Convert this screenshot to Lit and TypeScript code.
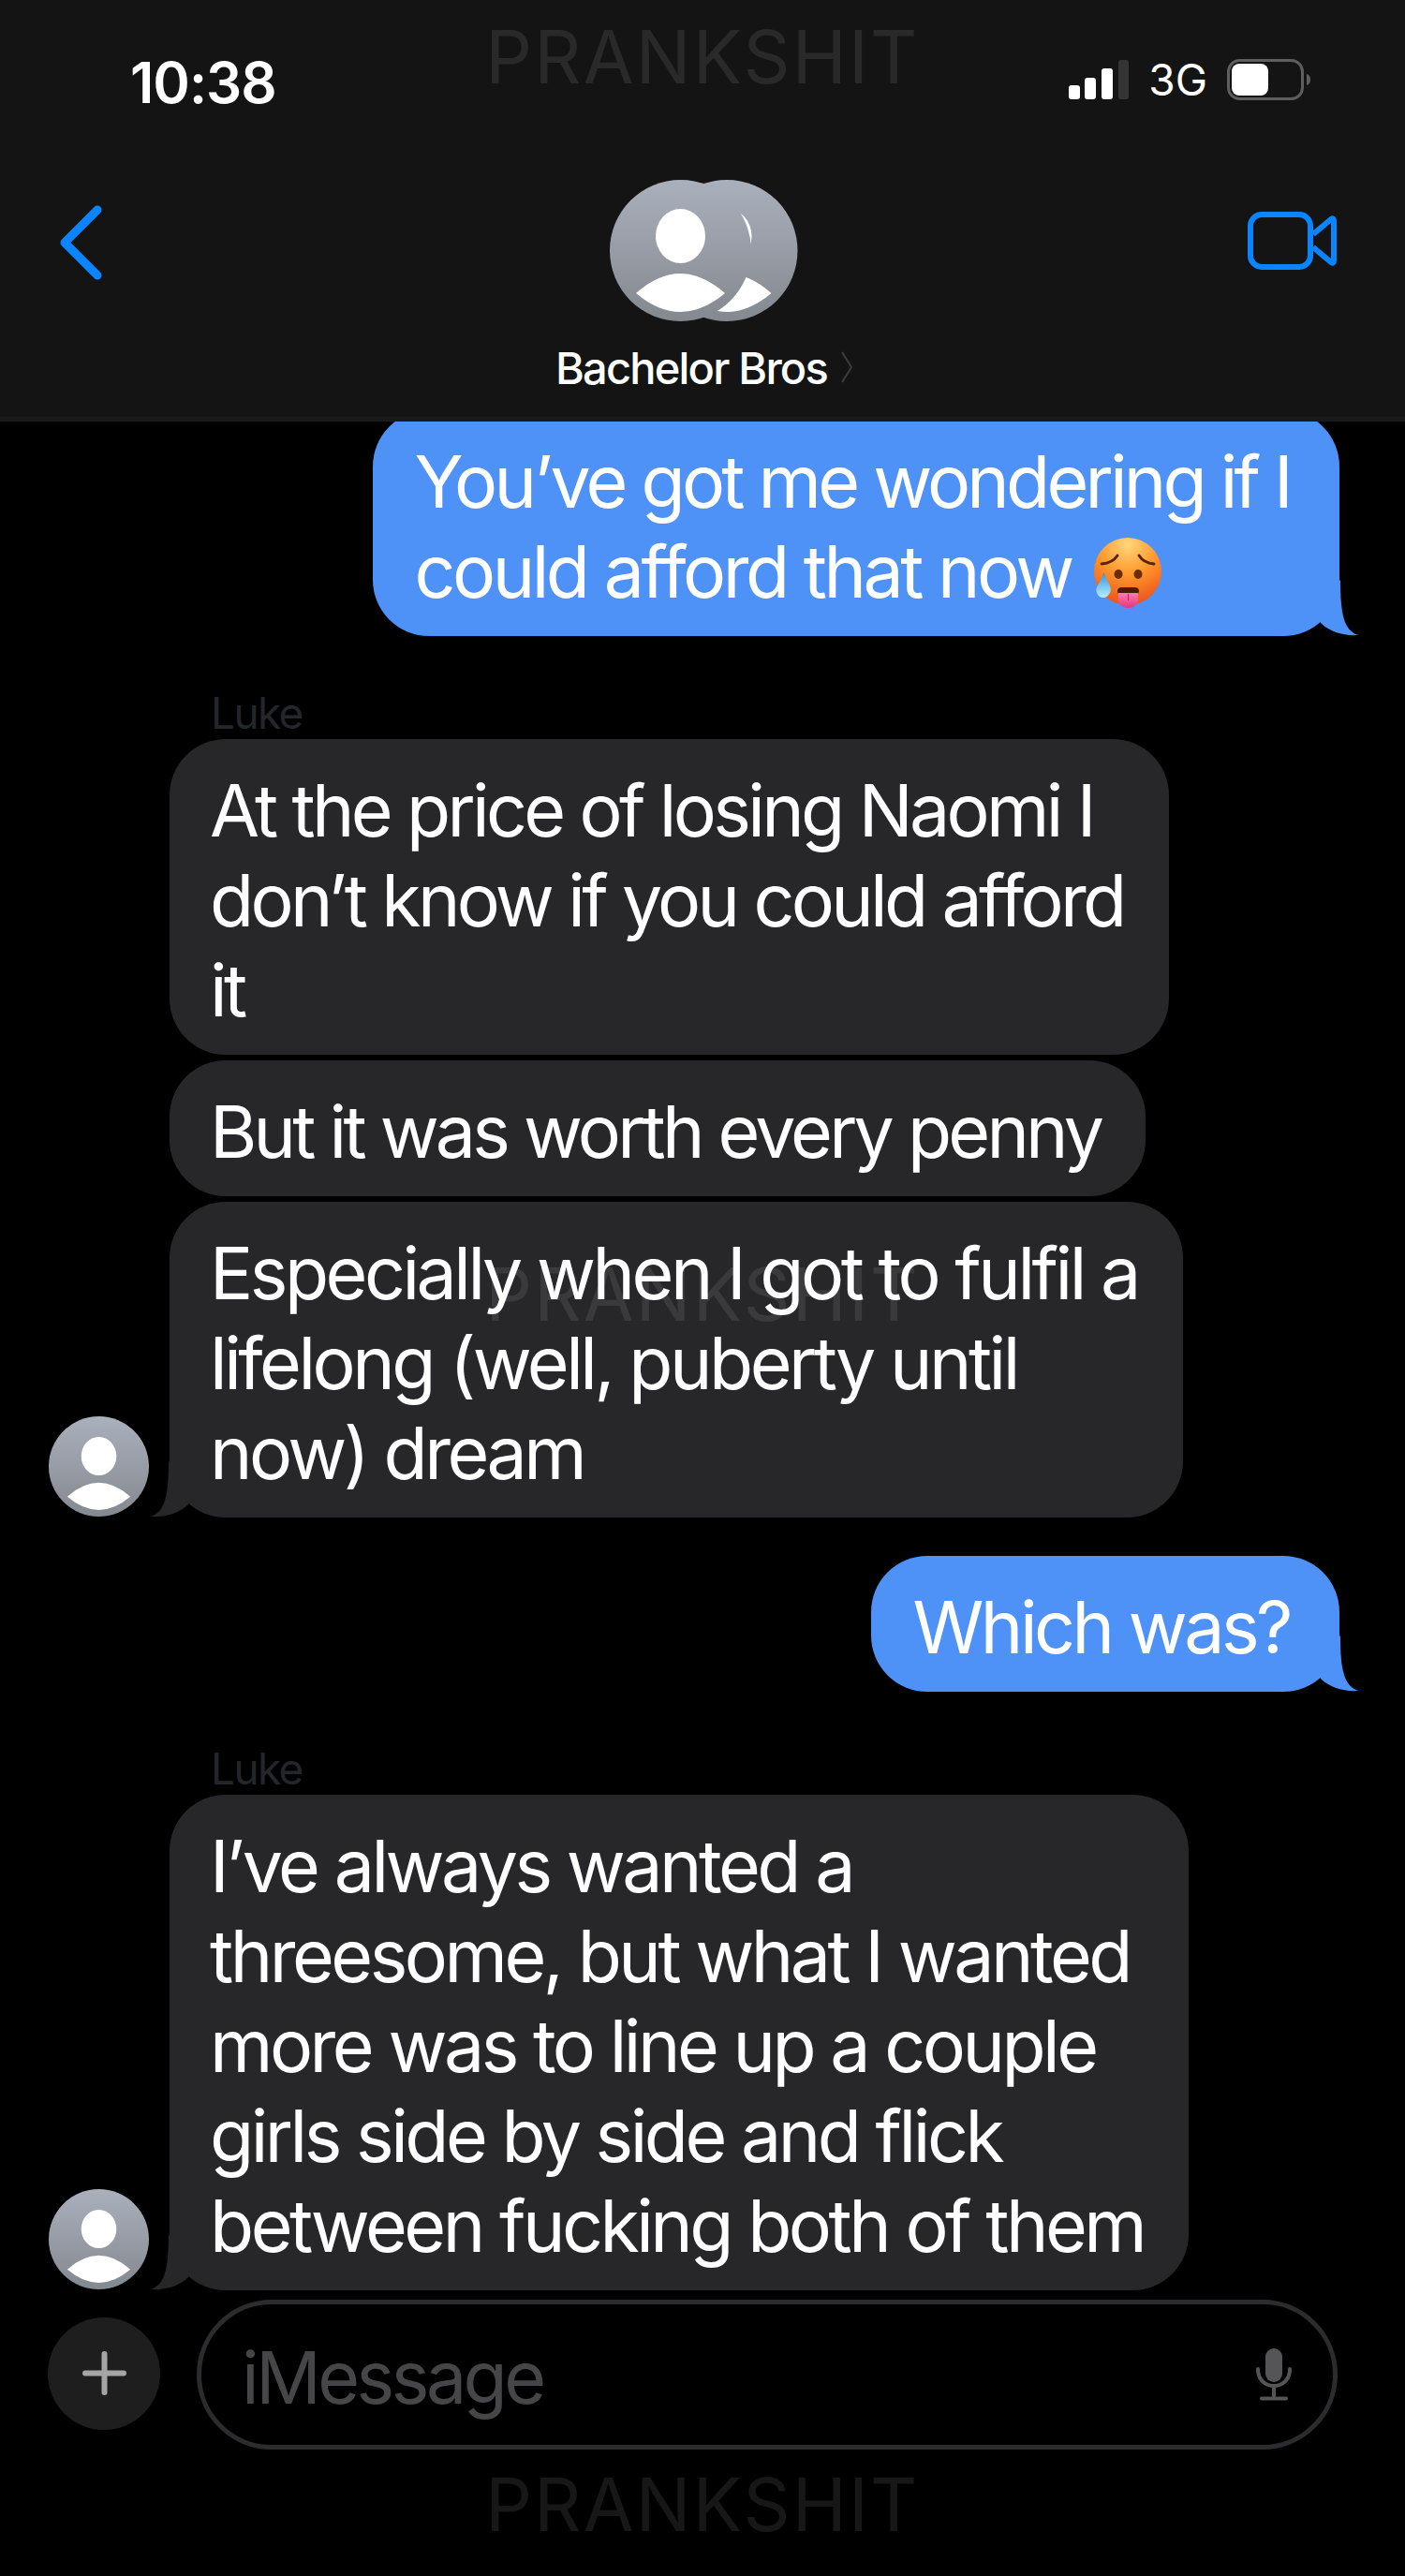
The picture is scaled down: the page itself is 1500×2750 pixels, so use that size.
import { LitElement, html, css, svg } from "lit";
import { customElement } from "lit/decorators.js";

const personDefs = svg`
  <defs>
    <linearGradient id="ag" x1="0" y1="0" x2="0" y2="1">
      <stop offset="0" stop-color="#aab0bc"/>
      <stop offset="1" stop-color="#84888f"/>
    </linearGradient>
  </defs>`;

const person = (dx: number) => svg`
  <circle cx=${75.5 + dx} cy="75.5" r="75.5" fill="url(#ag)"/>
  <ellipse cx=${75.5 + dx} cy="60" rx="26.5" ry="29" fill="#fff"/>
  <path d="M${28 + dx} 121 Q${75.5 + dx} 79 ${123 + dx} 121 Q${75.5 + dx} 161 ${28 + dx} 121Z" fill="#fff"/>`;

const tail = (cls: string) => html`<svg class="tail ${cls}" viewBox="0 0 50 60" width="50" height="60">
  <path d="M31 0C31 37 35 54 50 59C35 60 20 56 10 46L0 30Z" fill="currentColor"/>
</svg>`;

const emoji = html`<svg class="emoji" viewBox="0 0 75 75" width="75" height="75">
  <defs>
    <radialGradient id="face" cx="0.5" cy="0.1" r="0.95">
      <stop offset="0" stop-color="#ffd77c"/>
      <stop offset="0.45" stop-color="#ff9a2e"/>
      <stop offset="1" stop-color="#ec4a17"/>
    </radialGradient>
    <linearGradient id="drop" x1="0" y1="0" x2="0" y2="1">
      <stop offset="0" stop-color="#2b97dc"/>
      <stop offset="1" stop-color="#b9ecfb"/>
    </linearGradient>
    <linearGradient id="tongue" x1="0" y1="0" x2="0" y2="1">
      <stop offset="0" stop-color="#f57fb0"/>
      <stop offset="1" stop-color="#e8337f"/>
    </linearGradient>
  </defs>
  <circle cx="36" cy="36" r="36" fill="url(#face)"/>
  <path d="M8 28Q20 27 25 19M48 19Q53 27 64 28" fill="none" stroke="#5a2406" stroke-width="3" stroke-linecap="round"/>
  <ellipse cx="26" cy="39" rx="4.5" ry="5" fill="#6b2d06"/>
  <ellipse cx="47" cy="39" rx="4.5" ry="5" fill="#6b2d06"/>
  <path d="M25 57Q25 53 30 53H43Q48 53 48 57Q48 61 43 61H30Q25 61 25 57Z" fill="#4e1a08"/>
  <path d="M26 59H47V64Q47 75 36.5 75Q26 75 26 64Z" fill="url(#tongue)"/>
  <path d="M36.5 60V67" stroke="#c12a6a" stroke-width="1.2"/>
  <path d="M10.5 37Q12 42 16 49Q19 55 17 59Q14 64 10 64Q5 64 3 59Q1 55 5 49Q9 42 10.5 37Z" fill="url(#drop)"/>
</svg>`;

@customElement("app-root")
export class AppRoot extends LitElement {
  static styles = css`
    :host {
      display: block;
      position: relative;
      width: 1500px;
      height: 2750px;
      background: #000;
      overflow: hidden;
      color: #fff;
      font-family: Inter, "Liberation Sans", sans-serif;
    }
    .header {
      position: relative;
      z-index: 2;
      height: 445px;
      background: #141414;
      border-bottom: 5px solid #1a1a1a;
    }
    .status {
      height: 170px;
      display: flex;
      align-items: center;
      justify-content: space-between;
      padding: 0 100px 0 139px;
    }
    .time {
      font-size: 60px;
      font-weight: 600;
      letter-spacing: -1px;
      margin-top: 6px;
    }
    .status-right {
      display: flex;
      align-items: center;
      gap: 21px;
    }
    .net {
      font-size: 46px;
      font-weight: 400;
      letter-spacing: 0;
    }
    .nav {
      display: grid;
      grid-template-columns: 1fr auto 1fr;
      padding: 22px 72px 0 76px;
    }
    .back {
      margin: 27px 0 0 -13px;
    }
    .video {
      justify-self: end;
      margin-top: 34px;
    }
    .center {
      display: flex;
      flex-direction: column;
      align-items: center;
    }
    .name-row {
      display: flex;
      align-items: center;
      gap: 14px;
      margin-top: 21px;
      height: 56px;
    }
    .name {
      font-size: 47px;
      font-weight: 500;
      letter-spacing: -1.8px;
    }
    .list {
      display: flex;
      flex-direction: column;
      margin-top: -12px;
    }
    .out {
      align-self: flex-end;
      margin-right: 70px;
    }
    .sender {
      margin: 54px 0 0 225px;
      height: 56px;
      line-height: 56px;
      font-size: 46px;
      letter-spacing: -1.6px;
      color: #23262b;
    }
    .group {
      display: flex;
      align-items: flex-end;
      gap: 22px;
      padding-left: 52px;
    }
    .stack {
      display: flex;
      flex-direction: column;
      align-items: flex-start;
      gap: 6px;
    }
    .avatar {
      display: block;
      flex: none;
      margin-bottom: 1px;
    }
    .bubble {
      position: relative;
      padding: 28px 48px 21px 43px;
      border-radius: 60px;
      font-size: 77px;
      line-height: 96px;
      white-space: nowrap;
      letter-spacing: -3.5px;
    }
    .tight {
      letter-spacing: -3.8px;
    }
    .tighter {
      letter-spacing: -3.67px;
    }
    .blue {
      background: #4e92f7;
      color: #fff;
      padding-left: 45px;
      padding-right: 53px;
    }
    .gray {
      background: #27272a;
      color: #fff;
    }
    .tail {
      position: absolute;
      bottom: 0;
    }
    .tail-r {
      right: -20px;
      color: #4e92f7;
    }
    .tail-l {
      left: -20px;
      color: #27272a;
      transform: scaleX(-1);
    }
    .emoji {
      vertical-align: -11px;
      margin-left: 6px;
    }
    .mt {
      margin-top: 41px;
    }
    .composer {
      display: flex;
      align-items: center;
      gap: 39px;
      margin-top: 10px;
      padding-left: 51px;
      width: 1428px;
      box-sizing: border-box;
    }
    .plus {
      flex: none;
      width: 120px;
      height: 120px;
      border-radius: 50%;
      background: #1f1e1f;
      display: flex;
      align-items: center;
      justify-content: center;
      margin-top: -3px;
    }
    .pill {
      flex: 1;
      height: 160px;
      box-sizing: border-box;
      border: 5px solid #2c2c2e;
      border-radius: 80px;
      display: flex;
      align-items: center;
      justify-content: space-between;
      padding: 0 43px 0 43px;
    }
    .placeholder {
      font-size: 77px;
      letter-spacing: -3.5px;
      color: #464649;
      padding-top: 5px;
    }
    .wm {
      position: absolute;
      left: 0;
      width: 1500px;
      text-align: center;
      font-size: 78px;
      line-height: 78px;
      letter-spacing: 2.2px;
      color: rgba(255, 255, 255, 0.09);
      z-index: 3;
      pointer-events: none;
    }
    .wm-top { top: 22px; }
    .wm-mid { top: 1343px; }
    .wm-bot { top: 2635px; }
  `;

  render() {
    return html`
      <div class="header">
        <div class="status">
          <span class="time">10:38</span>
          <div class="status-right">
            <svg width="64" height="42" viewBox="0 0 64 42">
              <rect x="0" y="27" width="12" height="15" rx="3" fill="#fff"/>
              <rect x="17" y="19" width="12" height="23" rx="3" fill="#fff"/>
              <rect x="35" y="9" width="12" height="33" rx="3" fill="#fff"/>
              <rect x="53" y="0" width="11" height="42" rx="3" fill="#343434"/>
            </svg>
            <span class="net">3G</span>
            <svg width="90" height="44" viewBox="0 0 90 44">
              <rect x="1.5" y="1.5" width="79" height="41" rx="12" fill="none" stroke="#5e5e5e" stroke-width="3"/>
              <rect x="5" y="5" width="39" height="34" rx="8" fill="#fff"/>
              <path d="M85 16Q89 17 89 22Q89 27 85 28Z" fill="#5e5e5e"/>
            </svg>
          </div>
        </div>
        <div class="nav">
          <svg class="back" width="46" height="80" viewBox="0 0 46 80">
            <path d="M41 5L6 40L41 75" fill="none" stroke="#0a84ff" stroke-width="9" stroke-linecap="round" stroke-linejoin="round"/>
          </svg>
          <div class="center">
            <svg width="201" height="151" viewBox="0 0 201 151">
              ${personDefs}
              ${person(49.5)}
              ${person(0)}
            </svg>
            <div class="name-row">
              <span class="name">Bachelor Bros</span>
              <svg width="14" height="36" viewBox="0 0 14 36">
                <path d="M2 2L12 18L2 34" fill="none" stroke="#3c3c3e" stroke-width="2"/>
              </svg>
            </div>
          </div>
          <svg class="video" width="96" height="63" viewBox="0 0 96 63">
            <rect x="3" y="3" width="64" height="56" rx="12" fill="none" stroke="#0a84ff" stroke-width="6"/>
            <path d="M70 24L89 8Q92 6 92 10V52Q92 56 89 54L70 38" fill="none" stroke="#0a84ff" stroke-width="6" stroke-linejoin="round"/>
          </svg>
        </div>
      </div>

      <div class="list">
        <div class="bubble blue out"><span class="tight">You’ve got me wondering if I</span><br />could afford that now ${emoji}${tail("tail-r")}</div>

        <div class="sender">Luke</div>
        <div class="group">
          <svg class="avatar" width="107" height="107" viewBox="0 0 151 151">${person(0)}</svg>
          <div class="stack">
            <div class="bubble gray tighter">At the price of losing Naomi I<br />don’t know if you could afford<br />it</div>
            <div class="bubble gray tight">But it was worth every penny</div>
            <div class="bubble gray">Especially when I got to fulfil a<br />lifelong (well, puberty until<br />now) dream${tail("tail-l")}</div>
          </div>
        </div>

        <div class="bubble blue out mt">Which was?${tail("tail-r")}</div>

        <div class="sender">Luke</div>
        <div class="group">
          <svg class="avatar" width="107" height="107" viewBox="0 0 151 151">${person(0)}</svg>
          <div class="stack">
            <div class="bubble gray">I’ve always wanted a<br />threesome, but what I wanted<br />more was to line up a couple<br />girls side by side and flick<br />between fucking both of them${tail("tail-l")}</div>
          </div>
        </div>

        <div class="composer">
          <div class="plus">
            <svg width="47" height="47" viewBox="0 0 47 47">
              <path d="M3 23.5H44M23.5 3V44" stroke="#a5a5a8" stroke-width="6" stroke-linecap="round"/>
            </svg>
          </div>
          <div class="pill">
            <span class="placeholder">iMessage</span>
            <svg width="40" height="56" viewBox="0 0 40 56">
              <rect x="11" y="0" width="18" height="36" rx="9" fill="#555557"/>
              <path d="M3 22C3 33 10 40 20 40C30 40 37 33 37 22M20 40V52M7 53.5H33" fill="none" stroke="#555557" stroke-width="4" stroke-linecap="round"/>
            </svg>
          </div>
        </div>
      </div>

      <div class="wm wm-top">PRANKSHIT</div>
      <div class="wm wm-mid">PRANKSHIT</div>
      <div class="wm wm-bot">PRANKSHIT</div>
    `;
  }
}
